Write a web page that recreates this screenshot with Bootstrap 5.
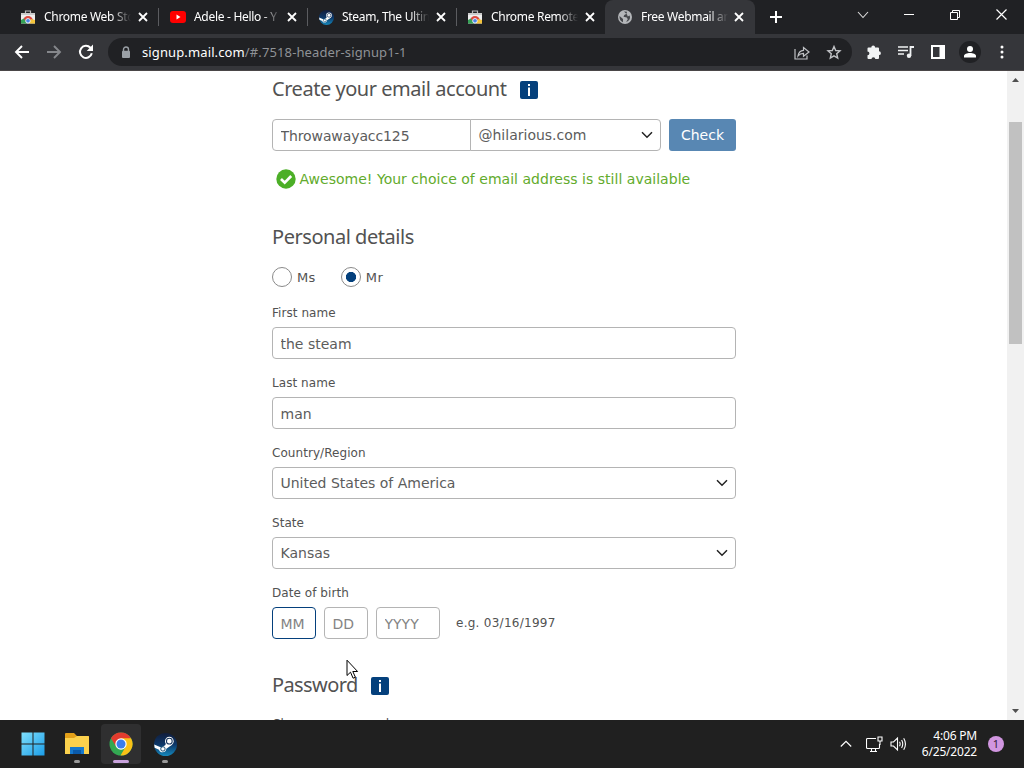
<!DOCTYPE html>
<html lang="en">
<head>
    <meta charset="UTF-8">
    <meta name="viewport" content="width=device-width, initial-scale=1.0">
    <link href="https://cdn.jsdelivr.net/npm/bootstrap@5.3.1/dist/css/bootstrap.min.css" rel="stylesheet">
    <script src="https://cdn.jsdelivr.net/npm/bootstrap@5.3.1/dist/js/bootstrap.bundle.min.js"></script>

    <title>Free Webmail and Email</title>

    <style>
        body {
            height: 768px;
            font-family: "DejaVu Sans", sans-serif;
            color: #525252;
        }

        svg {
            display: block;
            flex: none;
        }

        /* browser window */
        .tab-strip {
            height: 34px;
            padding-left: 9px;
            background: #202124;
            color: #fff;
            font: 12px/16px "Noto Sans", sans-serif;
        }

        .browser-tab {
            width: 149px;
            height: 34px;
            padding: 0 10px 0 12px;
            position: relative;
        }

        .browser-tab + .browser-tab:not(.current)::before {
            content: "";
            position: absolute;
            left: 0;
            top: 8px;
            width: 1px;
            height: 18px;
            background: #5b5c60;
        }

        .browser-tab.current {
            background: #35363a;
            border-radius: 8px 8px 0 0;
            margin-right: 6px;
            padding-left: 13px;
            padding-right: 11px;
            width: 150px;
        }

        .tab-title {
            width: 87px;
            margin-left: 9px;
            white-space: nowrap;
            overflow: hidden;
            letter-spacing: -.3px;
            -webkit-mask-image: linear-gradient(90deg, #000 78%, transparent 100%);
        }

        .win-btn {
            width: 46px;
            height: 29px;
        }

        .tool-bar {
            height: 37px;
            background: #35363a;
            border-bottom: 1px solid #4a4647;
            padding-left: 6px;
            padding-right: 6px;
            font: 14px/20px "Noto Sans", sans-serif;
        }

        .tool-btn {
            width: 32px;
            height: 32px;
        }

        .omnibox {
            width: 744px;
            height: 28px;
            margin-left: 6px;
            margin-right: 6px;
            border-radius: 14px;
            background: #202124;
            color: #8f9296;
            padding-left: 13px;
            padding-right: 2px;
        }

        .omnibox .url-text {
            margin-left: 11px;
            font-size: 13px;
            letter-spacing: .12px;
        }

        /* sign-up page */
        .page-area {
            height: 649px;
            background: #fff;
        }

        .signup {
            width: 464px;
            margin-left: 272px;
            padding-top: 3px;
        }

        .signup h2 {
            height: 30px;
            font: 20px/30px "Noto Sans", sans-serif;
            letter-spacing: -.46px;
        }

        .info-box {
            width: 18px;
            height: 18px;
            margin-top: 2px;
            margin-left: 13px;
            border-radius: 2px;
            background: #04407c;
        }

        .mail-row {
            margin-top: 15px;
        }

        .signup .form-control,
        .signup .form-select {
            height: 32px;
            padding: 1px 7px 0 7.5px;
            font-size: 14px;
            line-height: 30px;
            color: #5c5c5c;
            border: 1px solid #b4b4b4;
            border-radius: 4px;
        }

        .signup .form-select {
            padding-top: 0;
            background-image: none;
        }

        .signup .form-control::placeholder {
            color: #848484;
        }

        .signup .mail-name {
            width: 199px;
            border-radius: 4px 0 0 4px;
            letter-spacing: -.1px;
        }

        .signup .mail-domain {
            width: 191px;
            margin-left: -1px;
            border-radius: 0 4px 4px 0;
        }

        .check-btn {
            width: 67px;
            height: 32px;
            padding: 0;
            border: 0;
            border-radius: 3px;
            background: #5887b3;
            color: #fff;
            font-size: 14px;
        }

        .available {
            height: 24px;
            margin: 16px 0 31px 4px;
            color: #62ab2c;
            font-size: 14px;
        }

        .avail-text {
            margin-left: 3.5px;
            letter-spacing: .02px;
        }

        .radio-row {
            height: 20px;
            margin: 15px 0 18px;
            font-size: 13px;
        }

        .radio-label {
            margin: 1px 25px 0 5px;
            letter-spacing: .4px;
        }

        .signup .form-check-input {
            width: 20px;
            height: 20px;
            margin: 0;
            border: 1px solid #8a8a8a;
            background: #fff;
        }

        .signup .form-check-input:checked {
            background: radial-gradient(circle, #04407c 0 4.8px, #fff 5.4px);
        }

        .field {
            margin-bottom: 16px;
        }

        .field-label {
            display: block;
            height: 16px;
            margin-bottom: 6px;
            font-size: 12px;
            line-height: 17px;
            letter-spacing: .06px;
        }

        .signup .date-part {
            width: 44px;
        }

        .signup .date-part.active {
            border-color: #04407c;
        }

        .signup .date-year {
            width: 64px;
        }

        .date-hint {
            margin-left: 8px;
            font-size: 12px;
            letter-spacing: .27px;
        }

        .signup .password-head {
            margin: 31px 0 16px;
            letter-spacing: -.6px;
        }

        .scroll-rail {
            width: 17px;
            background: #f1f1f1;
        }

        .scroll-thumb {
            width: 13px;
            height: 222px;
            margin-top: 51px;
            margin-left: 2px;
            background: #c1c1c1;
        }

        .pointer {
            position: absolute;
            left: 346px;
            top: 659px;
        }

        /* taskbar */
        .task-bar {
            height: 48px;
            background: #202020;
            color: #fff;
            padding-left: 13px;
            font: 12px/16px "Noto Sans", sans-serif;
        }

        .task-app {
            width: 40px;
            height: 40px;
            margin-right: 4px;
            border-radius: 4px;
            position: relative;
        }

        .task-app.current {
            background: #2f2f30;
        }

        .task-app.running::after {
            content: "";
            position: absolute;
            bottom: 1px;
            left: 17px;
            width: 6px;
            height: 3px;
            border-radius: 2px;
            background: #9a9a9a;
        }

        .task-app.current::after {
            left: 12px;
            width: 16px;
            background: #c8a2dc;
        }

        .tray {
            padding-right: 20px;
        }

        .tray-net {
            margin-left: 14px;
        }

        .tray-vol {
            margin-left: 7px;
        }

        .clock {
            width: 70px;
            letter-spacing: -.2px;
        }

        .notif {
            width: 16px;
            height: 16px;
            margin-left: 11px;
            border-radius: 50%;
            background: #d196e0;
            color: #33203a;
            font-size: 11px;
        }
    </style>
</head>
<body class="d-flex flex-column overflow-hidden position-relative">

    <!-- shared icons -->
    <svg width="0" height="0" class="position-absolute">
        <defs>
            <symbol id="i-close" viewBox="0 0 10 10"><path d="M1 1l8 8M9 1L1 9" stroke="#fff" stroke-width="1.8" fill="none"/></symbol>
            <symbol id="i-store" viewBox="0 0 14 14">
                <path d="M4.5 3V1h5v2" fill="none" stroke="#bbb" stroke-width="1.2"/>
                <path d="M0 3h14v10.500H0z" fill="#eee"/>
                <path d="M0 3h14v2H0z" fill="#ccc"/>
                <path d="M2 11a5 5 0 0 1 10 0z" fill="#dc4a40"/>
                <path d="M0 13.500V10l3-1.500 3 5z" fill="#36a257"/>
                <path d="M14 13.500V10l-4-1-2 4.500z" fill="#f4c43b"/>
                <circle cx="7" cy="10.800" r="2.300" fill="#4a86e8" stroke="#fff" stroke-width=".8"/>
            </symbol>
            <linearGradient id="g-steam" x1="0" y1="0" x2="0" y2="1"><stop offset="0" stop-color="#111d3c"/><stop offset=".5" stop-color="#0d3768"/><stop offset="1" stop-color="#1589bd"/></linearGradient>
            <symbol id="i-steam" viewBox="0 0 24 24">
                <circle cx="12" cy="12" r="12" fill="url(#g-steam)"/>
                <path d="M0.200 12l7.300 3 4.200-2.300 2-4.700 4.800 4.400-5.600 4.100c-.3 4.500-6.500 5-7.700.9L.7 15.500z" fill="#fff"/>
                <circle cx="16" cy="8.500" r="4.500" fill="#fff"/>
                <circle cx="16" cy="8.500" r="3" fill="#fff" stroke="#17355c" stroke-width="1.100"/>
                <circle cx="9.300" cy="16.600" r="2.300" fill="none" stroke="#17496f"/>
            </symbol>
            <symbol id="i-down" viewBox="0 0 12 8"><path d="M1 1.200l5 5 5-5" fill="none" stroke="#222" stroke-width="1.500"/></symbol>
        </defs>
    </svg>

    <!-- tabs -->
    <div class="tab-strip d-flex">
        <div class="browser-tab d-flex align-items-center">
            <svg width="14" height="14"><use href="#i-store"/></svg>
            <span class="tab-title">Chrome Web Sto</span>
            <svg class="ms-auto" width="10" height="10"><use href="#i-close"/></svg>
        </div>
        <div class="browser-tab d-flex align-items-center">
            <svg width="16" height="12" viewBox="0 0 16 12"><rect width="16" height="12" rx="3" fill="#f00"/><path d="M6.500 3.500v5l4-2.500z" fill="#fff"/></svg>
            <span class="tab-title ms-2">Adele - Hello - Y</span>
            <svg class="ms-auto" width="10" height="10"><use href="#i-close"/></svg>
        </div>
        <div class="browser-tab d-flex align-items-center">
            <svg width="15" height="15"><use href="#i-steam"/></svg>
            <span class="tab-title ms-2">Steam, The Ultin</span>
            <svg class="ms-auto" width="10" height="10"><use href="#i-close"/></svg>
        </div>
        <div class="browser-tab d-flex align-items-center">
            <svg width="14" height="14"><use href="#i-store"/></svg>
            <span class="tab-title">Chrome Remote</span>
            <svg class="ms-auto" width="10" height="10"><use href="#i-close"/></svg>
        </div>
        <div class="browser-tab current d-flex align-items-center">
            <svg width="14" height="14" viewBox="0 0 14 14"><circle cx="7" cy="7" r="7" fill="#b4b6b9"/><path d="M1.500 6l3.500 3v3.200C2.500 11.300 1.200 9 1.500 6zM6 1.500l3 .3-.5 2L6.300 5l-.8 1.800 3.300.6 1 1.800-1.600 2.500c3.500-.7 4.500-4 3.400-6.300l-1.800 1L9 4.500" fill="#45474b"/></svg>
            <span class="tab-title">Free Webmail an</span>
            <svg class="ms-auto" width="10" height="10"><use href="#i-close"/></svg>
        </div>
        <svg class="align-self-center ms-2" width="14" height="14" viewBox="0 0 14 14"><path d="M7 1v12M1 7h12" stroke="#fff" stroke-width="2"/></svg>
        <div class="d-flex ms-auto">
            <div class="win-btn d-flex align-items-center justify-content-center"><svg width="12" height="8" viewBox="0 0 12 8"><path d="M1 1l5 5.500L11 1" fill="none" stroke="#ddd" stroke-width="1.100"/></svg></div>
            <div class="win-btn d-flex align-items-center justify-content-center"><svg width="10" height="10" viewBox="0 0 10 10"><path d="M0 4.500h10" stroke="#fff"/></svg></div>
            <div class="win-btn d-flex align-items-center justify-content-center"><svg width="10" height="10" viewBox="0 0 10 10"><path d="M.5 2.500h7v7h-7zM2.500 2.500v-2h7v7h-2" fill="none" stroke="#fff"/></svg></div>
            <div class="win-btn d-flex align-items-center justify-content-center"><svg width="11" height="11" viewBox="0 0 11 11"><path d="M.5.500l10 10M10.500.500l-10 10" stroke="#fff" stroke-width="1.200"/></svg></div>
        </div>
    </div>

    <!-- address bar -->
    <div class="tool-bar d-flex align-items-center">
        <div class="tool-btn d-flex align-items-center justify-content-center"><svg width="16" height="14" viewBox="0 0 16 14"><path d="M15 7H2M8 1L2 7l6 6" fill="none" stroke="#fff" stroke-width="1.900"/></svg></div>
        <div class="tool-btn d-flex align-items-center justify-content-center"><svg width="16" height="14" viewBox="0 0 16 14"><path d="M1 7h13M8 1l6 6-6 6" fill="none" stroke="#85878b" stroke-width="1.900"/></svg></div>
        <div class="tool-btn d-flex align-items-center justify-content-center"><svg width="16" height="16" viewBox="0 0 16 16"><path d="M13.800 9.300A6 6 0 1 1 12.400 3.800L14 5.500" fill="none" stroke="#fff" stroke-width="2"/><path d="M15 .5v6.500H8.700z" fill="#fff"/></svg></div>
        <div class="omnibox d-flex align-items-center">
            <svg width="10" height="13" viewBox="0 0 10 13"><path d="M2.500 5V3.500a2.500 2.500 0 0 1 5 0V5" fill="none" stroke="#9aa0a6" stroke-width="1.400"/><rect x="1" y="4.800" width="8" height="7.200" rx="1" fill="#9aa0a6"/></svg>
            <span class="url-text"><span class="text-white">signup.mail.com</span>/#.7518-header-signup1-1</span>
            <div class="tool-btn d-flex align-items-center justify-content-center ms-auto"><svg width="16" height="15" viewBox="0 0 16 15"><path d="M1 4v10h12v-3.500M4 11c.5-4 2.500-5.500 5.500-5.700V2.500L15 7l-5.500 4.200V8.300C7.300 8.300 5.500 9 4 11z" fill="none" stroke="#c0c2c5" stroke-width="1.200"/></svg></div>
            <div class="tool-btn d-flex align-items-center justify-content-center"><svg width="16" height="15" viewBox="0 0 16 15"><path d="M8 1.500l1.700 4 4.300.4-3.300 2.800 1 4.300L8 10.800 4.300 13l1-4.300L2 5.900l4.300-.4z" fill="none" stroke="#c0c2c5" stroke-width="1.400"/></svg></div>
        </div>
        <div class="tool-btn d-flex align-items-center justify-content-center"><svg width="16" height="16" viewBox="0 0 16 16"><path d="M2.500 3.500H5.300a1.900 1.900 0 1 1 3.800 0H12q1 0 1 1v2.800a1.900 1.900 0 1 1 0 3.800v3q0 1-1 1H9.300a1.900 1.900 0 0 0-3.800 0H2.500q-1 0-1-1v-2.900a1.900 1.900 0 0 0 0-3.800V4.500q0-1 1-1z" fill="#f1f3f4"/></svg></div>
        <div class="tool-btn d-flex align-items-center justify-content-center"><svg width="16" height="14" viewBox="0 0 16 14"><path d="M0 2h10M0 5.500h10M0 9h6" stroke="#f1f3f4" stroke-width="1.500"/><path d="M12.500 11V2H16" fill="none" stroke="#f1f3f4" stroke-width="1.800"/><circle cx="11" cy="10.800" r="2.200" fill="#f1f3f4"/></svg></div>
        <div class="tool-btn d-flex align-items-center justify-content-center"><svg width="14" height="14" viewBox="0 0 14 14"><path d="M1 1h12v12H1z" fill="none" stroke="#fff" stroke-width="2"/><path d="M8.500 1H13v12H8.500z" fill="#fff"/></svg></div>
        <div class="tool-btn d-flex align-items-center justify-content-center"><svg width="22" height="22" viewBox="0 0 22 22"><circle cx="11" cy="11" r="11" fill="#202124"/><circle cx="11" cy="8" r="3" fill="#fff"/><path d="M5 16.500v-1.500c0-4 12-4 12 0v1.500z" fill="#fff"/></svg></div>
        <div class="tool-btn d-flex align-items-center justify-content-center"><svg width="4" height="14" viewBox="0 0 4 14"><circle cx="2" cy="2" r="1.500" fill="#fff"/><circle cx="2" cy="7" r="1.500" fill="#fff"/><circle cx="2" cy="12" r="1.500" fill="#fff"/></svg></div>
    </div>

    <!-- sign-up form -->
    <div class="page-area d-flex justify-content-between overflow-hidden">
        <form class="signup">
            <h2 class="d-flex align-items-center m-0">Create your email account
                <span class="info-box d-flex align-items-center justify-content-center"><svg width="4" height="12" viewBox="0 0 4 12"><path d="M1 0h2v2H1zM1 3.500h2V12H1z" fill="#fff"/></svg></span>
            </h2>
            <div class="mail-row d-flex">
                <input type="text" class="form-control mail-name" value="Throwawayacc125">
                <div class="form-select mail-domain d-flex align-items-center justify-content-between">@hilarious.com
                    <svg width="12" height="8"><use href="#i-down"/></svg>
                </div>
                <button type="button" class="btn check-btn ms-2">Check</button>
            </div>
            <div class="available d-flex align-items-center">
                <svg width="20" height="20" viewBox="0 0 20 20"><circle cx="10" cy="10" r="9.700" fill="#4caf27"/><path d="M5 10l3.700 3.700L15.200 7" fill="none" stroke="#fff" stroke-width="2.700"/></svg>
                <span class="avail-text">Awesome! Your choice of email address is still available</span>
            </div>

            <h2 class="m-0">Personal details</h2>
            <div class="radio-row d-flex align-items-center">
                <input class="form-check-input" type="radio" name="title" id="ms">
                <label class="radio-label" for="ms">Ms</label>
                <input class="form-check-input" type="radio" name="title" id="mr" checked>
                <label class="radio-label" for="mr">Mr</label>
            </div>

            <div class="field">
                <label class="field-label" for="first">First name</label>
                <input type="text" class="form-control" id="first" value="the steam">
            </div>
            <div class="field">
                <label class="field-label" for="last">Last name</label>
                <input type="text" class="form-control" id="last" value="man">
            </div>
            <div class="field">
                <span class="field-label">Country/Region</span>
                <div class="form-select d-flex align-items-center justify-content-between">United States of America
                    <svg width="12" height="8"><use href="#i-down"/></svg>
                </div>
            </div>
            <div class="field">
                <span class="field-label">State</span>
                <div class="form-select d-flex align-items-center justify-content-between">Kansas
                    <svg width="12" height="8"><use href="#i-down"/></svg>
                </div>
            </div>
            <div class="field mb-0">
                <label class="field-label" for="month">Date of birth</label>
                <div class="d-flex align-items-center gap-2">
                    <input type="text" class="form-control date-part active" id="month" placeholder="MM">
                    <input type="text" class="form-control date-part" placeholder="DD">
                    <input type="text" class="form-control date-year" placeholder="YYYY">
                    <span class="date-hint">e.g. 03/16/1997</span>
                </div>
            </div>

            <h2 class="password-head d-flex align-items-center">Password
                <span class="info-box d-flex align-items-center justify-content-center"><svg width="4" height="12" viewBox="0 0 4 12"><path d="M1 0h2v2H1zM1 3.500h2V12H1z" fill="#fff"/></svg></span>
            </h2>
            <span class="field-label">Choose a password</span>
        </form>

        <div class="scroll-rail d-flex flex-column">
            <svg class="position-absolute" width="17" height="17" viewBox="0 0 17 17"><path d="M5 11l3.500-4 3.500 4z" fill="#505050"/></svg>
            <div class="scroll-thumb"></div>
            <svg class="mt-auto" width="17" height="17" viewBox="0 0 17 17"><path d="M5 6h7l-3.500 4z" fill="#505050"/></svg>
        </div>
    </div>

    <svg class="pointer" width="13" height="21" viewBox="0 0 13 21"><path d="M1 1.200v15.300l3.500-3.300 2.600 6 2.300-1-2.600-5.700h4.800z" fill="#fff" stroke="#000"/></svg>

    <!-- taskbar -->
    <div class="task-bar d-flex align-items-center">
        <div class="task-app d-flex align-items-center justify-content-center">
            <svg width="24" height="24" viewBox="0 0 24 24"><defs><linearGradient id="g-win" x1="0" y1="0" x2="1" y2="1"><stop offset="0" stop-color="#7fe0fc"/><stop offset="1" stop-color="#1b9de8"/></linearGradient></defs><path d="M.5.500h11v11H.5zM12.500.500h11v11h-11zM.5 12.500h11v11H.5zM12.500 12.500h11v11h-11z" fill="url(#g-win)"/></svg>
        </div>
        <div class="task-app running d-flex align-items-center justify-content-center">
            <svg width="26" height="24" viewBox="0 0 26 24"><path d="M1 2q0-1 1-1h8l3 3h11q1 0 1 1v17H1z" fill="#e3a019"/><path d="M1 6h9l3-2h11q1 0 1 1v17H1z" fill="#fbd14d"/><path d="M6 15h14v7H6z" fill="#1679cd"/><path d="M9 18h8v4H9z" fill="#0a5aaa"/></svg>
        </div>
        <div class="task-app running current d-flex align-items-center justify-content-center">
            <svg width="24" height="24" viewBox="0 0 24 24"><circle cx="12" cy="12" r="11.500" fill="#33a852"/><path d="M2 6.300a11.500 11.500 0 0 1 20 0L12 9 7.200 14.800z" fill="#e33b2e"/><path d="M22 6.300A11.500 11.500 0 0 1 11.500 23.500L16.800 14.500 12 6.300z" fill="#fbc116"/><circle cx="12" cy="12" r="5.700" fill="#fff"/><circle cx="12" cy="12" r="4.500" fill="#3b7ded"/></svg>
        </div>
        <div class="task-app running d-flex align-items-center justify-content-center">
            <svg width="23" height="23"><use href="#i-steam"/></svg>
        </div>

        <div class="tray d-flex align-items-center ms-auto">
            <svg width="12" height="8" viewBox="0 0 12 8"><path d="M.8 6.500L6 1.300l5.200 5.200" fill="none" stroke="#fff" stroke-width="1.200"/></svg>
            <svg class="tray-net" width="17" height="17" viewBox="0 0 17 17"><path d="M10 2.500H1.500q-1 0-1 1v8q0 1 1 1h11q1 0 1-1V8M4 15.500h7M5.500 12.500v3M9.500 12.500v3M12 1h4v4h-4zM14 5v4" fill="none" stroke="#fff" stroke-width="1.100"/></svg>
            <svg class="tray-vol" width="17" height="16" viewBox="0 0 17 16"><path d="M1 6h2.500L7.500 2v12l-4-4H1zM9.500 5.800q1.300 2.200 0 4.400M11.600 4q2.300 4 0 8M13.700 2.200q3.500 5.800 0 11.600" fill="none" stroke="#fff" stroke-width="1.100"/></svg>
            <div class="clock text-end">4:06 PM<br>6/25/2022</div>
            <div class="notif d-flex align-items-center justify-content-center">1</div>
        </div>
    </div>
</body>
</html>
